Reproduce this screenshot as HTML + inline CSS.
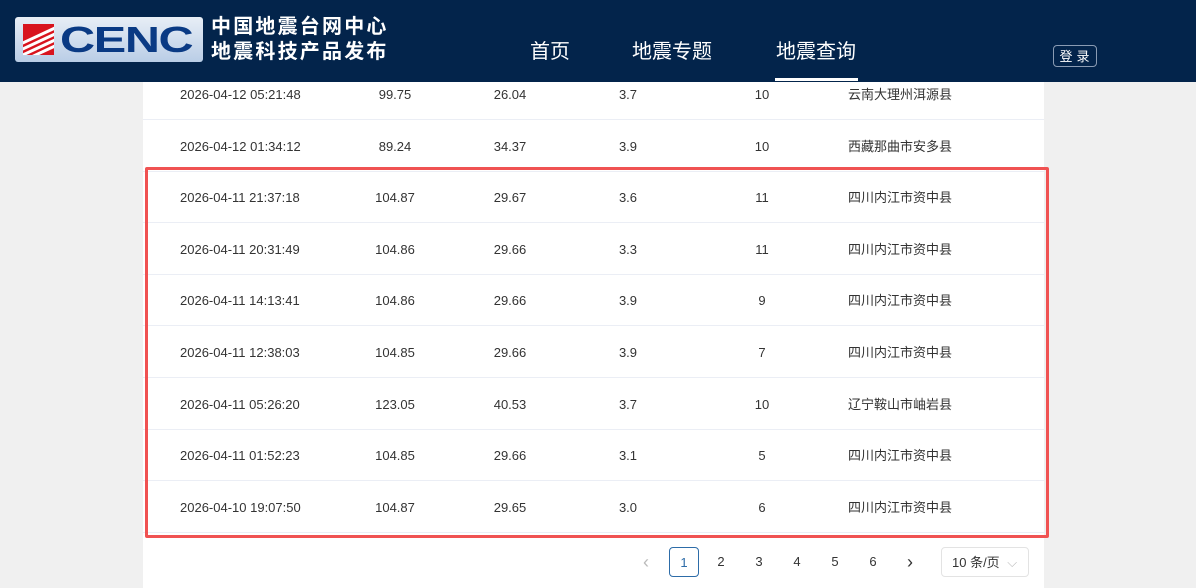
<!DOCTYPE html>
<html><head><meta charset="utf-8"><style>
*{margin:0;padding:0;box-sizing:border-box}
body{width:1196px;height:588px;background:#f0f0f0;font-family:"Liberation Sans","Noto Sans CJK SC",sans-serif;overflow:hidden;position:relative}
.hd{position:absolute;left:0;top:0;width:1196px;height:82px;background:#03244b}
.logo{position:absolute;left:15px;top:17px;width:188px;height:45px;border-radius:3px;background:linear-gradient(#e8eef6,#b9cde6);overflow:hidden}
.red{position:absolute;left:8px;top:7px;width:31px;height:31px;background:#d8141e;overflow:hidden}
.red i{position:absolute;left:-4px;width:44px;height:3px;background:#fff;transform:rotate(-25deg)}
.cenc{position:absolute;left:45px;top:4px;font:900 36px/38px "Liberation Sans",sans-serif;color:#0a3a84;letter-spacing:-1px;transform:scaleX(1.35);transform-origin:left}
.tt{position:absolute;left:211px;top:15px;color:#fff;font-weight:bold;font-size:20px;line-height:25px;letter-spacing:2.2px}
.nav{position:absolute;top:40px;color:#fff;font-size:20px;line-height:24px}
.ul{position:absolute;left:775px;top:78px;width:83px;height:3px;background:#fff}
.login{position:absolute;left:1053px;top:45px;width:44px;height:22px;border:1px solid #8a9bb3;border-radius:4px;color:#fff;font-size:13px;text-align:center;line-height:22px;letter-spacing:4px;padding-left:3px}
.panel{position:absolute;left:143px;top:82px;width:901px;height:506px;background:#fff}
.row{position:absolute;left:143px;width:901px;height:52px;border-bottom:1px solid #ebeef5;font-size:13px;color:#333}
.row span{position:absolute;top:0;line-height:26px}
.box{position:absolute;left:145px;top:167px;width:904px;height:371px;border:3px solid #f05252;border-radius:2px}
.pg{position:absolute;top:547px;height:30px;line-height:30px;font-size:13px;color:#333;text-align:center;width:30px}
</style></head><body>
<div class="hd">
<div class="logo"><div class="red"><i style="top:9px"></i><i style="top:15px"></i><i style="top:21px"></i><i style="top:27px"></i></div><div class="cenc">CENC</div></div>
<div class="tt">中国地震台网中心<br>地震科技产品发布</div>
<div class="nav" style="left:530px">首页</div>
<div class="nav" style="left:632px">地震专题</div>
<div class="nav" style="left:776px">地震查询</div>
<div class="ul"></div>
<div class="login">登录</div>
</div>
<div class="panel"></div>
<div id="rows"></div>
<div class="box"></div>
<div class="pg" style="left:631px;color:#bbb;font-size:18px">‹</div>
<div class="pg" style="left:669px;border:1px solid #2d6ca8;border-radius:4px;color:#2d6ca8">1</div>
<div class="pg" style="left:706px">2</div>
<div class="pg" style="left:744px">3</div>
<div class="pg" style="left:782px">4</div>
<div class="pg" style="left:820px">5</div>
<div class="pg" style="left:858px">6</div>
<div class="pg" style="left:895px;font-size:18px">›</div>
<div class="pg" style="left:941px;width:88px;border:1px solid #e3e3e3;border-radius:4px;text-align:left;padding-left:10px">10 条/页 <span style="color:#bbb;margin-left:4px">⌵</span></div>
<script>
var d=[["2026-04-12 05:21:48","99.75","26.04","3.7","10","云南大理州洱源县"],["2026-04-12 01:34:12","89.24","34.37","3.9","10","西藏那曲市安多县"],["2026-04-11 21:37:18","104.87","29.67","3.6","11","四川内江市资中县"],["2026-04-11 20:31:49","104.86","29.66","3.3","11","四川内江市资中县"],["2026-04-11 14:13:41","104.86","29.66","3.9","9","四川内江市资中县"],["2026-04-11 12:38:03","104.85","29.66","3.9","7","四川内江市资中县"],["2026-04-11 05:26:20","123.05","40.53","3.7","10","辽宁鞍山市岫岩县"],["2026-04-11 01:52:23","104.85","29.66","3.1","5","四川内江市资中县"],["2026-04-10 19:07:50","104.87","29.65","3.0","6","四川内江市资中县"]];
var h="";d.forEach(function(r,i){var c=94+i*51.6;var t=c-26;
h+='<div class="row" style="top:'+(t)+'px;height:52px">'+
'<span style="left:37px;top:14px">'+r[0]+'</span>'+
'<span style="left:222px;width:60px;text-align:center;top:14px">'+r[1]+'</span>'+
'<span style="left:337px;width:60px;text-align:center;top:14px">'+r[2]+'</span>'+
'<span style="left:455px;width:60px;text-align:center;top:14px">'+r[3]+'</span>'+
'<span style="left:589px;width:60px;text-align:center;top:14px">'+r[4]+'</span>'+
'<span style="left:705px;top:14px">'+r[5]+'</span></div>';});
document.getElementById("rows").innerHTML=h;
</script>
</body></html>
